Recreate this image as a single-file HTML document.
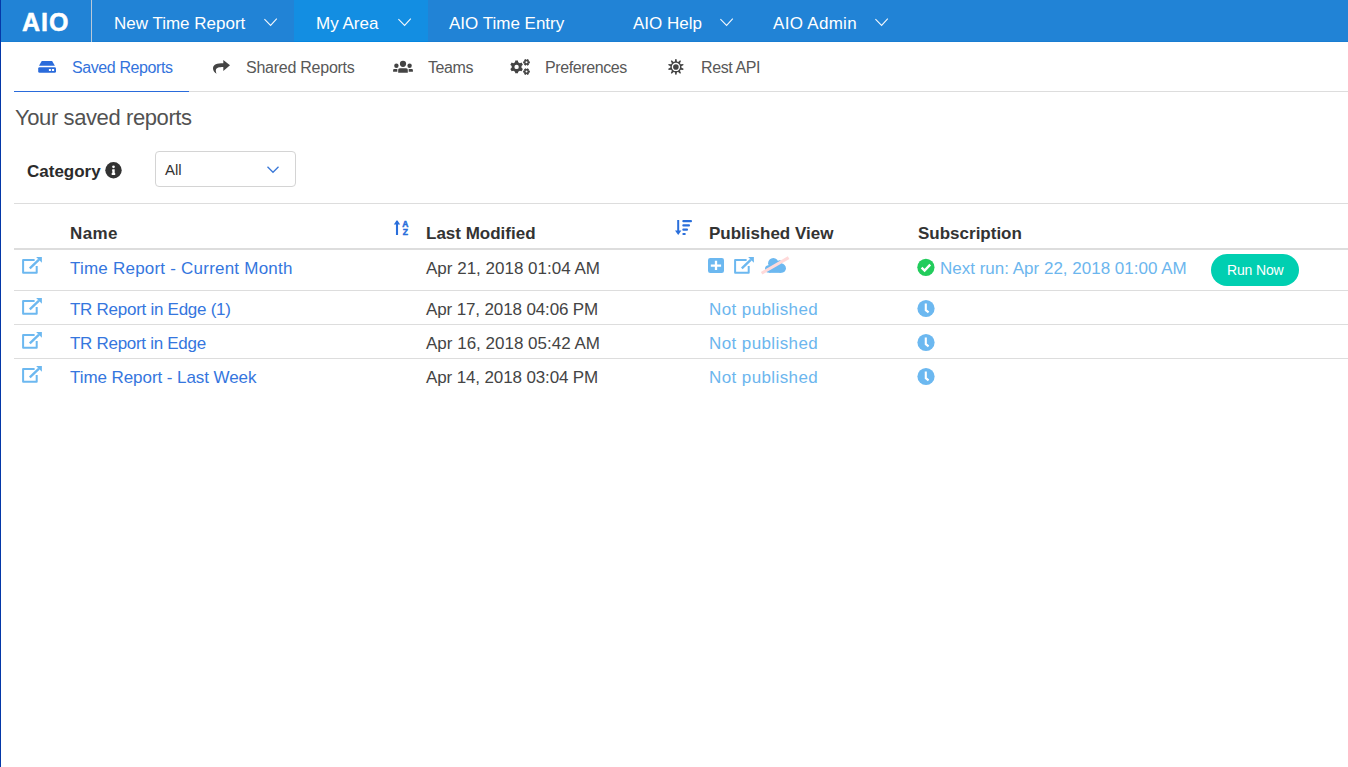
<!DOCTYPE html>
<html><head><meta charset="utf-8">
<style>
html,body{margin:0;padding:0;}
body{width:1348px;height:767px;overflow:hidden;background:#fff;position:relative;font-family:"Liberation Sans",sans-serif;}
.a{position:absolute;white-space:pre;}
.ic{position:absolute;overflow:visible;}
#lb{position:absolute;left:0;top:0;width:1px;height:767px;background:#0538a8;z-index:5;}
#hdr{position:absolute;left:0;top:0;width:1348px;height:42px;background:#2183d6;}
#hdr .bl{position:absolute;left:0;top:41px;width:1348px;height:1px;background:#1a7dd2;}
#act{position:absolute;left:294px;top:0;width:134px;height:41px;background:#138ee2;}
#act .bl2{position:absolute;left:0;top:41px;width:134px;height:1px;background:#0586e0;}
#sep{position:absolute;left:91px;top:0;width:1px;height:42px;background:#b9c9d9;}
.nav{color:#fff;font-size:17px;line-height:20px;top:14px;}
.chev{position:absolute;}
.sub{font-size:16px;line-height:18px;top:59px;color:#585858;letter-spacing:-0.4px;}
.sub.on{color:#3373dc;}
.hd{font-size:17px;font-weight:bold;color:#333;line-height:20px;}
.cell{font-size:17px;line-height:20px;color:#444;}
.lnk{color:#3576de;}
.lt{color:#6cb6ee;}
.np{letter-spacing:0.4px;}
.hr{position:absolute;height:1px;background:#ddd;}
</style></head>
<body>
<div id="lb"></div>
<div id="hdr">
  <div class="bl"></div>
  <div id="act"><div class="bl2"></div></div>
  <div id="sep"></div>
  <span class="a" style="left:22px;top:7px;font-size:25px;line-height:30px;font-weight:bold;color:#fff;letter-spacing:1px;-webkit-text-stroke:0.5px #fff;">AIO</span>
  <span class="a nav" style="left:114px;">New Time Report</span>
  <svg class="chev" style="left:264px;top:18px" width="14" height="9" viewBox="0 0 14 9"><path d="M0.4 1.1 L6.6 7.4 L12.8 0.6" fill="none" stroke="#f4f8fc" stroke-width="1.1"/></svg>
  <span class="a nav" style="left:316px;">My Area</span>
  <svg class="chev" style="left:398px;top:18px" width="14" height="9" viewBox="0 0 14 9"><path d="M0.4 1.1 L6.6 7.4 L12.8 0.6" fill="none" stroke="#f4f8fc" stroke-width="1.1"/></svg>
  <span class="a nav" style="left:449px;">AIO Time Entry</span>
  <span class="a nav" style="left:633px;">AIO Help</span>
  <svg class="chev" style="left:720px;top:18px" width="14" height="9" viewBox="0 0 14 9"><path d="M0.4 1.1 L6.6 7.4 L12.8 0.6" fill="none" stroke="#f4f8fc" stroke-width="1.1"/></svg>
  <span class="a nav" style="left:773px;letter-spacing:0.3px;">AIO Admin</span>
  <svg class="chev" style="left:875px;top:18px" width="14" height="9" viewBox="0 0 14 9"><path d="M0.4 1.1 L6.6 7.4 L12.8 0.6" fill="none" stroke="#f4f8fc" stroke-width="1.1"/></svg>
</div>

<!-- sub nav -->
<div class="hr" style="left:14px;top:91px;width:1334px;background:#ddd;"></div>
<div style="position:absolute;left:14px;top:91px;width:175px;height:1px;background:#2a6bdb;"></div>
<svg class="ic" style="left:38px;top:61px" width="18" height="12" viewBox="0 0 18 12"><path d="M3.75 0 H14.1 L16.9 4.75 H1 Z" fill="#2a6bdb"/><rect x="0.2" y="6.2" width="17.8" height="5.6" rx="1.4" fill="#2a6bdb"/><rect x="10.9" y="8" width="2" height="2" fill="#fff"/><rect x="13.9" y="8" width="2.2" height="2" fill="#fff"/></svg>
<span class="a sub on" style="left:72px;">Saved Reports</span>
<svg class="ic" style="left:208px;top:55px" width="28" height="24" viewBox="0 0 28 24"><path d="M15.3 4.9 L22 10.3 L15.3 15.9 L15.3 11.9 C11 11.9 7.5 12.5 7.8 16 C7.9 17 8.2 18 8.6 18.8 C6.5 17.5 5 15.5 5 13.5 C5 9.5 9 8.3 15.3 8.3 Z" fill="#444"/></svg>
<span class="a sub" style="left:246px;letter-spacing:-0.25px;">Shared Reports</span>
<svg class="ic" style="left:388px;top:55px" width="30" height="23" viewBox="0 0 30 23"><circle cx="15" cy="8.85" r="3.1" fill="#444"/><path d="M10.2 17.7 V14.8 Q10.2 13.2 11.8 13.2 H18.2 Q19.8 13.2 19.8 14.8 V17.7 Z" fill="#444"/><circle cx="8.4" cy="10.8" r="2.2" fill="#444"/><path d="M5.1 16.7 V15 Q5.1 14 6.1 14 H9.3 V16.7 Z" fill="#444"/><circle cx="21.6" cy="10.8" r="2.2" fill="#444"/><path d="M20.7 16.7 V14 H23.9 Q24.9 14 24.9 15 V16.7 Z" fill="#444"/></svg>
<span class="a sub" style="left:428px;">Teams</span>
<svg class="ic" style="left:506px;top:55px" width="28" height="24" viewBox="0 0 28 24"><path fill-rule="evenodd" fill="#444" d="M8.98 7.17 L9.29 5.43 L11.91 5.43 L12.22 7.17 L13.89 8.13 L15.55 7.53 L16.86 9.80 L15.51 10.94 L15.51 12.86 L16.86 14.00 L15.55 16.27 L13.89 15.67 L12.22 16.63 L11.91 18.37 L9.29 18.37 L8.98 16.63 L7.31 15.67 L5.65 16.27 L4.34 14.00 L5.69 12.86 L5.69 10.94 L4.34 9.80 L5.65 7.53 L7.31 8.13ZM8.40 11.90a2.20 2.20 0 1 0 4.40 0a2.20 2.20 0 1 0 -4.40 0Z"/><path fill-rule="evenodd" fill="#444" d="M22.75 6.26 L23.86 6.38 L23.86 8.32 L22.75 8.44 L22.57 8.76 L23.02 9.78 L21.34 10.75 L20.68 9.84 L20.32 9.84 L19.66 10.75 L17.98 9.78 L18.43 8.76 L18.25 8.44 L17.14 8.32 L17.14 6.38 L18.25 6.26 L18.43 5.94 L17.98 4.92 L19.66 3.95 L20.32 4.86 L20.68 4.86 L21.34 3.95 L23.02 4.92 L22.57 5.94ZM19.50 7.35a1.00 1.00 0 1 0 2.00 0a1.00 1.00 0 1 0 -2.00 0Z"/><path fill-rule="evenodd" fill="#444" d="M22.75 15.51 L23.86 15.63 L23.86 17.57 L22.75 17.69 L22.57 18.01 L23.02 19.03 L21.34 20.00 L20.68 19.09 L20.32 19.09 L19.66 20.00 L17.98 19.03 L18.43 18.01 L18.25 17.69 L17.14 17.57 L17.14 15.63 L18.25 15.51 L18.43 15.19 L17.98 14.17 L19.66 13.20 L20.32 14.11 L20.68 14.11 L21.34 13.20 L23.02 14.17 L22.57 15.19ZM19.50 16.60a1.00 1.00 0 1 0 2.00 0a1.00 1.00 0 1 0 -2.00 0Z"/></svg>
<span class="a sub" style="left:545px;">Preferences</span>
<svg class="ic" style="left:663px;top:55px" width="26" height="24" viewBox="0 0 26 24"><path fill-rule="evenodd" fill="#444" d="M11.81 6.56 L12.35 4.07 L13.45 4.07 L13.99 6.56 L15.18 6.95 L17.09 5.25 L17.98 5.90 L16.95 8.23 L17.69 9.25 L20.22 8.99 L20.57 10.04 L18.36 11.32 L18.36 12.58 L20.57 13.86 L20.22 14.91 L17.69 14.65 L16.95 15.67 L17.98 18.00 L17.09 18.65 L15.18 16.95 L13.99 17.34 L13.45 19.83 L12.35 19.83 L11.81 17.34 L10.62 16.95 L8.71 18.65 L7.82 18.00 L8.85 15.67 L8.11 14.65 L5.58 14.91 L5.23 13.86 L7.44 12.58 L7.44 11.32 L5.23 10.04 L5.58 8.99 L8.11 9.25 L8.85 8.23 L7.82 5.90 L8.71 5.25 L10.62 6.95ZM8.75 11.95a4.15 4.15 0 1 0 8.30 0a4.15 4.15 0 1 0 -8.30 0ZM10.10 11.95a2.80 2.80 0 1 0 5.60 0a2.80 2.80 0 1 0 -5.60 0Z"/></svg>
<span class="a sub" style="left:701px;">Rest API</span>

<span class="a" style="left:15px;top:105px;font-size:22px;line-height:26px;color:#525252;letter-spacing:-0.4px;">Your saved reports</span>

<span class="a" style="left:27px;top:162px;font-size:17px;line-height:20px;font-weight:bold;color:#2b2b2b;">Category</span>
<svg class="ic" style="left:100px;top:157px" width="28" height="28" viewBox="0 0 28 28"><circle cx="13.5" cy="13.3" r="8.2" fill="#333"/><circle cx="13.5" cy="9.85" r="1.35" fill="#fff"/><path d="M12.3 12.3 H14.7 V16.1 H15.2 V17.9 H11.7 V16.1 H12.3 V13.7 H12 Z" fill="#fff"/></svg>
<div style="position:absolute;left:155px;top:151px;width:139px;height:34px;border:1px solid #d4d4d4;border-radius:4px;"></div>
<span class="a" style="left:165px;top:161px;font-size:15px;line-height:18px;color:#333;">All</span>
<svg class="chev" style="left:267px;top:166px" width="12" height="8" viewBox="0 0 12 8"><path d="M0.5 0.7 L6 6.3 L11.5 0.7" fill="none" stroke="#3a78d8" stroke-width="1.3"/></svg>

<div class="hr" style="left:14px;top:203px;width:1334px;"></div>
<span class="a hd" style="left:70px;top:224px;letter-spacing:0.4px;">Name</span>
<svg class="ic" style="left:390px;top:215px" width="24" height="24" viewBox="0 0 24 24"><path d="M7 20 V6" stroke="#2a6fdb" stroke-width="2.1"/><path d="M3.8 9.6 L7 5 L10.2 9.6 Z" fill="#2a6fdb"/><text x="15.2" y="11.6" font-family="Liberation Sans" font-weight="bold" font-size="8.5" fill="#2a6fdb" stroke="#2a6fdb" stroke-width="0.5" text-anchor="middle">A</text><text x="15.3" y="20" font-family="Liberation Sans" font-weight="bold" font-size="8.5" fill="#2a6fdb" stroke="#2a6fdb" stroke-width="0.5" text-anchor="middle">Z</text></svg>
<span class="a hd" style="left:426px;top:224px;">Last Modified</span>
<svg class="ic" style="left:670px;top:215px" width="26" height="24" viewBox="0 0 26 24"><path d="M8.2 5 V17" stroke="#2a6fdb" stroke-width="2"/><path d="M5 15.5 L8.2 20 L11.4 15.5 Z" fill="#2a6fdb"/><rect x="12.3" y="5" width="9.7" height="2.2" rx="1" fill="#2a6fdb"/><rect x="12.3" y="9.2" width="7.7" height="2.2" rx="1" fill="#2a6fdb"/><rect x="12.3" y="13.6" width="5.7" height="2.2" rx="1" fill="#2a6fdb"/><rect x="12.3" y="18" width="3.5" height="2.1" rx="1" fill="#2a6fdb"/></svg>
<span class="a hd" style="left:709px;top:224px;">Published View</span>
<span class="a hd" style="left:918px;top:224px;">Subscription</span>
<div class="hr" style="left:14px;top:248px;width:1334px;height:2px;"></div>

<svg class="ic" style="left:18px;top:252px" width="28" height="26" viewBox="0 0 28 26"><path d="M16.6 8 H5.1 V20.7 H18.7 V14" fill="none" stroke="#6cb8f0" stroke-width="2" stroke-linejoin="round"/><path d="M11.8 16.3 L21 7.6" stroke="#6cb8f0" stroke-width="2.4"/><path d="M18.1 5.1 H23.9 V10.7 Z" fill="#6cb8f0"/></svg>
<span class="a cell lnk" style="left:70px;top:259px;letter-spacing:0.22px;">Time Report - Current Month</span>
<span class="a cell" style="left:426px;top:259px;">Apr 21, 2018 01:04 AM</span>
<svg class="ic" style="left:708px;top:258px" width="16" height="15" viewBox="0 0 16 15"><rect x="0" y="0" width="16" height="15" rx="2.2" fill="#6cb8f0"/><path d="M2.8 7.6 H13.1 M8 2.8 V12" stroke="#fff" stroke-width="2.3"/></svg>
<svg class="ic" style="left:730px;top:252px" width="28" height="26" viewBox="0 0 28 26"><path d="M16.6 8 H5.1 V20.7 H18.7 V14" fill="none" stroke="#6cb8f0" stroke-width="2" stroke-linejoin="round"/><path d="M11.8 16.3 L21 7.6" stroke="#6cb8f0" stroke-width="2.4"/><path d="M18.1 5.1 H23.9 V10.7 Z" fill="#6cb8f0"/></svg>
<svg class="ic" style="left:758px;top:252px" width="36" height="26" viewBox="0 0 36 26"><g fill="#6cb8f0"><circle cx="10.7" cy="16.9" r="3.7"/><circle cx="15.3" cy="11.3" r="5.2"/><circle cx="21.8" cy="10.6" r="2.4"/><circle cx="23.3" cy="16.2" r="4.65"/><rect x="10.7" y="13" width="12.6" height="7.85"/></g><path d="M3.6 21.2 L30.6 5.6" stroke="#ffd9d9" stroke-width="3"/></svg>
<svg class="ic" style="left:916px;top:258px" width="20" height="20" viewBox="0 0 20 20"><circle cx="9.9" cy="9.35" r="8.6" fill="#22cc5c"/><path d="M5.6 9.6 L8.6 12.5 L14.2 6.6" fill="none" stroke="#fff" stroke-width="2.4"/></svg>
<span class="a cell lt" style="left:940px;top:259px;">Next run: Apr 22, 2018 01:00 AM</span>
<div style="position:absolute;left:1211px;top:254px;width:88px;height:32px;border-radius:16px;background:#00cfb1;"></div>
<span class="a" style="left:1227px;top:262px;font-size:14px;line-height:17px;color:#fff;letter-spacing:-0.15px;">Run Now</span>
<div class="hr" style="left:14px;top:290px;width:1334px;"></div>

<svg class="ic" style="left:18px;top:293px" width="28" height="26" viewBox="0 0 28 26"><path d="M16.6 8 H5.1 V20.7 H18.7 V14" fill="none" stroke="#6cb8f0" stroke-width="2" stroke-linejoin="round"/><path d="M11.8 16.3 L21 7.6" stroke="#6cb8f0" stroke-width="2.4"/><path d="M18.1 5.1 H23.9 V10.7 Z" fill="#6cb8f0"/></svg>
<span class="a cell lnk" style="left:70px;top:300px;letter-spacing:-0.27px;">TR Report in Edge (1)</span>
<span class="a cell" style="left:426px;top:300px;letter-spacing:-0.13px;">Apr 17, 2018 04:06 PM</span>
<span class="a cell lt np" style="left:709px;top:300px;">Not published</span>
<svg class="ic" style="left:917px;top:300px" width="18" height="18" viewBox="0 0 18 18"><circle cx="9" cy="8.5" r="8.6" fill="#6cb8f0"/><path d="M8.8 3.5 V10.2 L11.6 12.4" fill="none" stroke="#fff" stroke-width="2.1"/></svg>
<div class="hr" style="left:14px;top:324px;width:1334px;"></div>

<svg class="ic" style="left:18px;top:327px" width="28" height="26" viewBox="0 0 28 26"><path d="M16.6 8 H5.1 V20.7 H18.7 V14" fill="none" stroke="#6cb8f0" stroke-width="2" stroke-linejoin="round"/><path d="M11.8 16.3 L21 7.6" stroke="#6cb8f0" stroke-width="2.4"/><path d="M18.1 5.1 H23.9 V10.7 Z" fill="#6cb8f0"/></svg>
<span class="a cell lnk" style="left:70px;top:334px;letter-spacing:-0.29px;">TR Report in Edge</span>
<span class="a cell" style="left:426px;top:334px;">Apr 16, 2018 05:42 AM</span>
<span class="a cell lt np" style="left:709px;top:334px;">Not published</span>
<svg class="ic" style="left:917px;top:334px" width="18" height="18" viewBox="0 0 18 18"><circle cx="9" cy="8.5" r="8.6" fill="#6cb8f0"/><path d="M8.8 3.5 V10.2 L11.6 12.4" fill="none" stroke="#fff" stroke-width="2.1"/></svg>
<div class="hr" style="left:14px;top:358px;width:1334px;"></div>

<svg class="ic" style="left:18px;top:361px" width="28" height="26" viewBox="0 0 28 26"><path d="M16.6 8 H5.1 V20.7 H18.7 V14" fill="none" stroke="#6cb8f0" stroke-width="2" stroke-linejoin="round"/><path d="M11.8 16.3 L21 7.6" stroke="#6cb8f0" stroke-width="2.4"/><path d="M18.1 5.1 H23.9 V10.7 Z" fill="#6cb8f0"/></svg>
<span class="a cell lnk" style="left:70px;top:368px;letter-spacing:-0.07px;">Time Report - Last Week</span>
<span class="a cell" style="left:426px;top:368px;letter-spacing:-0.13px;">Apr 14, 2018 03:04 PM</span>
<span class="a cell lt np" style="left:709px;top:368px;">Not published</span>
<svg class="ic" style="left:917px;top:368px" width="18" height="18" viewBox="0 0 18 18"><circle cx="9" cy="8.5" r="8.6" fill="#6cb8f0"/><path d="M8.8 3.5 V10.2 L11.6 12.4" fill="none" stroke="#fff" stroke-width="2.1"/></svg>

</body></html>
